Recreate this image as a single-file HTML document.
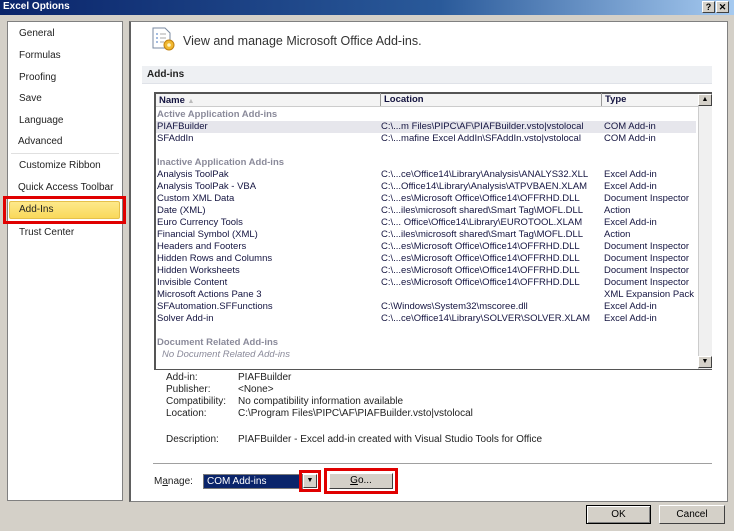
<!DOCTYPE html>
<html><head><style>
*{margin:0;padding:0;box-sizing:border-box}
body{width:734px;height:531px;background:#d4d0c8;font-family:"Liberation Sans",sans-serif;font-size:10px;color:#000;position:relative;overflow:hidden}
.a{position:absolute;white-space:nowrap}
#title{left:0;top:0;width:734px;height:15px;background:linear-gradient(90deg,#0a246a,#2a5a9a 60%,#a6caf0);color:#fff;font-weight:bold;font-size:10px;padding:1px 3px;line-height:12px}
.tb{position:absolute;top:1px;width:13px;height:12px;background:#d4d0c8;border:1px solid;border-color:#fff #404040 #404040 #fff;color:#000;font-size:9px;font-weight:bold;text-align:center;line-height:10px}
#left{left:7px;top:21px;width:116px;height:480px;background:#fff;border:1px solid #808080}
#main{left:129px;top:21px;width:599px;height:481px;background:#fff;border:1px solid #808080;border-left:2px solid #606060}
.li{position:absolute;left:11px;font-size:10px;color:#222}
.g{color:#8a8a9a}
#list{left:154px;top:92px;width:558px;height:278px;border:1px solid #555;border-left:2px solid #555;border-top:2px solid #555;background:#fff}
</style></head><body>
<div class="a" id="title">Excel Options</div>
<div class="tb" style="left:702px">?</div>
<div class="tb" style="left:716px">✕</div>

<div class="a" id="left">
<div class="li" style="top:6px">General</div>
<div class="li" style="top:28px">Formulas</div>
<div class="li" style="top:50px">Proofing</div>
<div class="li" style="top:71px">Save</div>
<div class="li" style="top:93px">Language</div>
<div class="li" style="top:114px;left:10px">Advanced</div>
<div style="position:absolute;left:3px;top:131px;width:108px;height:1px;background:#e0e0e0"></div>
<div class="li" style="top:138px">Customize Ribbon</div>
<div class="li" style="top:160px;left:10px">Quick Access Toolbar</div>
<div class="li" style="top:205px">Trust Center</div>
</div>
<div class="a" style="left:3px;top:196px;width:123px;height:28px;border:3px solid #e00000"></div>
<div class="a" style="left:9px;top:201px;width:111px;height:18px;background:linear-gradient(#fde98a,#f9d95a);border:1px solid #e6c14a;border-radius:2px;padding-left:9px;line-height:16px;color:#222">Add-Ins</div>

<div class="a" id="main"></div>
<svg class="a" style="left:150px;top:26px" width="26" height="26" viewBox="0 0 26 26">
<path d="M3 2h12l5 5v15H3z" fill="#fff" stroke="#7a8aa0"/>
<g stroke="#4a78c0"><path d="M6 8h2M6 12h2M6 16h2"/></g>
<g stroke="#aaa"><path d="M10 8h6M10 12h6M10 16h4"/></g>
<circle cx="19" cy="19" r="5" fill="#f0b830" stroke="#c08010"/>
<circle cx="19" cy="19" r="1.8" fill="#fff3c0"/>
</svg>
<div class="a" style="left:183px;top:34px;font-size:12.5px;color:#333">View and manage Microsoft Office Add-ins.</div>
<div class="a" style="left:142px;top:66px;width:570px;height:18px;background:#eef0f3;border-bottom:1px solid #dfe2e8;font-weight:bold;padding:3px 0 0 5px;color:#222">Add-ins</div>

<div class="a" id="list">
<div style="position:absolute;left:0;top:0;width:542px;height:13px;background:#f4f4f4;border-bottom:1px solid #ccc;font-weight:bold;font-size:9.5px;color:#141440">
<span style="position:absolute;left:3px;top:1px">Name <span style="color:#bbb;font-size:7px">▲</span></span>
<span style="position:absolute;left:224px;top:-1px;height:13px;border-left:1px solid #999;padding:1px 3px">Location</span>
<span style="position:absolute;left:445px;top:-1px;height:13px;border-left:1px solid #999;padding:1px 3px">Type</span>
</div>
<div style="position:absolute;left:542px;top:0;width:14px;height:275px;background:#f0f0f0;border-left:1px solid #ccc"></div>
<div style="position:absolute;left:542px;top:0;width:14px;height:12px;background:#d4d0c8;border:1px solid;border-color:#fff #404040 #404040 #fff;font-size:7px;text-align:center;line-height:10px">▲</div>
<div style="position:absolute;left:542px;top:262px;width:14px;height:12px;background:#d4d0c8;border:1px solid;border-color:#fff #404040 #404040 #fff;font-size:7px;text-align:center;line-height:10px">▼</div>
<div style="position:absolute;left:0;top:27px;width:540px;height:12px;background:#e6e6ec"></div>
</div>
<div class="a" style="left:157px;top:109px;line-height:12px;font-size:9.5px;color:#141440">
<div class="g" style="font-weight:bold">Active Application Add-ins</div>
<div>PIAFBuilder</div><div>SFAddIn</div><div>&nbsp;</div>
<div class="g" style="font-weight:bold">Inactive Application Add-ins</div>
<div>Analysis ToolPak</div><div>Analysis ToolPak - VBA</div><div>Custom XML Data</div><div>Date (XML)</div><div>Euro Currency Tools</div><div>Financial Symbol (XML)</div><div>Headers and Footers</div><div>Hidden Rows and Columns</div><div>Hidden Worksheets</div><div>Invisible Content</div><div>Microsoft Actions Pane 3</div><div>SFAutomation.SFFunctions</div><div>Solver Add-in</div><div>&nbsp;</div>
<div class="g" style="font-weight:bold">Document Related Add-ins</div>
<div class="g" style="font-style:italic;padding-left:5px">No Document Related Add-ins</div>
</div>
<div class="a" style="left:381px;top:121px;line-height:12px;font-size:9.5px;color:#141440">
<div>C:\...m Files\PIPC\AF\PIAFBuilder.vsto|vstolocal</div><div>C:\...mafine Excel AddIn\SFAddIn.vsto|vstolocal</div><div>&nbsp;</div><div>&nbsp;</div>
<div>C:\...ce\Office14\Library\Analysis\ANALYS32.XLL</div><div>C:\...Office14\Library\Analysis\ATPVBAEN.XLAM</div><div>C:\...es\Microsoft Office\Office14\OFFRHD.DLL</div><div>C:\...iles\microsoft shared\Smart Tag\MOFL.DLL</div><div>C:\... Office\Office14\Library\EUROTOOL.XLAM</div><div>C:\...iles\microsoft shared\Smart Tag\MOFL.DLL</div><div>C:\...es\Microsoft Office\Office14\OFFRHD.DLL</div><div>C:\...es\Microsoft Office\Office14\OFFRHD.DLL</div><div>C:\...es\Microsoft Office\Office14\OFFRHD.DLL</div><div>C:\...es\Microsoft Office\Office14\OFFRHD.DLL</div><div>&nbsp;</div><div>C:\Windows\System32\mscoree.dll</div><div>C:\...ce\Office14\Library\SOLVER\SOLVER.XLAM</div>
</div>
<div class="a" style="left:604px;top:121px;line-height:12px;font-size:9.5px;color:#141440">
<div>COM Add-in</div><div>COM Add-in</div><div>&nbsp;</div><div>&nbsp;</div>
<div>Excel Add-in</div><div>Excel Add-in</div><div>Document Inspector</div><div>Action</div><div>Excel Add-in</div><div>Action</div><div>Document Inspector</div><div>Document Inspector</div><div>Document Inspector</div><div>Document Inspector</div><div>XML Expansion Pack</div><div>Excel Add-in</div><div>Excel Add-in</div>
</div>

<div class="a" style="left:166px;top:372px;line-height:12px;color:#222">
<div>Add-in:</div><div>Publisher:</div><div>Compatibility:</div><div>Location:</div><div style="height:14px"></div><div>Description:</div>
</div>
<div class="a" style="left:238px;top:372px;line-height:12px;color:#222">
<div>PIAFBuilder</div><div>&lt;None&gt;</div><div>No compatibility information available</div><div>C:\Program Files\PIPC\AF\PIAFBuilder.vsto|vstolocal</div><div style="height:14px"></div><div>PIAFBuilder - Excel add-in created with Visual Studio Tools for Office</div>
</div>
<div class="a" style="left:153px;top:463px;width:559px;height:2px;background:#a0a0a0;border-bottom:1px solid #fff"></div>
<div class="a" style="left:154px;top:476px;color:#222">M<u>a</u>nage:</div>
<div class="a" style="left:203px;top:474px;width:100px;height:15px;border:1px solid #7a7a7a;background:#0a246a;color:#fff;padding:1px 3px;line-height:12px">COM Add-ins</div>
<div class="a" style="left:299px;top:470px;width:22px;height:22px;border:3px solid #e00000"></div>
<div class="a" style="left:303px;top:474px;width:14px;height:14px;background:#d4d0c8;border:1px solid;border-color:#fff #404040 #404040 #fff;font-size:7px;text-align:center;line-height:12px">▼</div>
<div class="a" style="left:324px;top:468px;width:74px;height:26px;border:3px solid #e00000"></div>
<div class="a" style="left:329px;top:473px;width:64px;height:16px;background:#d4d0c8;border:1px solid;border-color:#fff #404040 #404040 #fff;text-align:center;line-height:14px"><u>G</u>o...</div>

<div class="a" style="left:586px;top:505px;width:65px;height:19px;background:#d4d0c8;border:1px solid #000;box-shadow:inset 1px 1px #fff,inset -1px -1px #808080;text-align:center;line-height:17px">OK</div>
<div class="a" style="left:659px;top:505px;width:66px;height:19px;background:#d4d0c8;border:1px solid;border-color:#fff #404040 #404040 #fff;text-align:center;line-height:17px">Cancel</div>
</body></html>
